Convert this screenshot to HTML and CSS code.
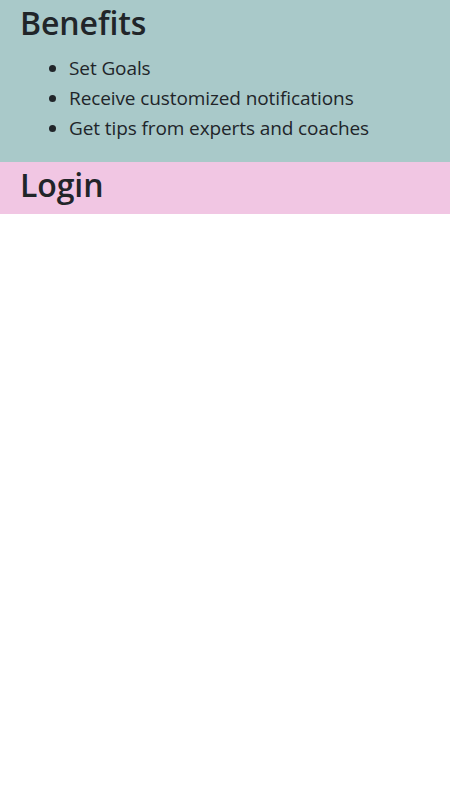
FILE: index.html
```html
<!DOCTYPE html>
<html>
<head>
<meta charset="utf-8">
<link rel="stylesheet" href="styles.css">
</head>
<body>
<section class="benefits">
  <h1 class="title">Benefits</h1>
  <ul class="list">
    <li>Set Goals</li>
    <li>Receive customized notifications</li>
    <li>Get tips from experts and coaches</li>
  </ul>
</section>
<section class="login">
  <h1 class="title">Login</h1>
</section>
</body>
</html>
```
FILE: styles.css
```css
html, body {
  margin: 0;
  padding: 0;
  background: #fff;
  color: #212529;
  font-family: "Open Sans", "Noto Sans", sans-serif;
}
.benefits {
  background: #a9c9c9;
  padding: 0 20px 19px;
}
.login {
  background: #f1c6e3;
  padding: 0 20px 7px;
}
.title {
  margin: 0 0 8px;
  font-size: 32px;
  font-weight: 600;
  line-height: 45px;
  letter-spacing: -0.1px;
}
.login .title {
  margin-bottom: 0;
}
.list {
  margin: 0;
  padding-left: 49px;
  font-size: 19px;
  line-height: 30px;
  letter-spacing: -0.1px;
}
```
